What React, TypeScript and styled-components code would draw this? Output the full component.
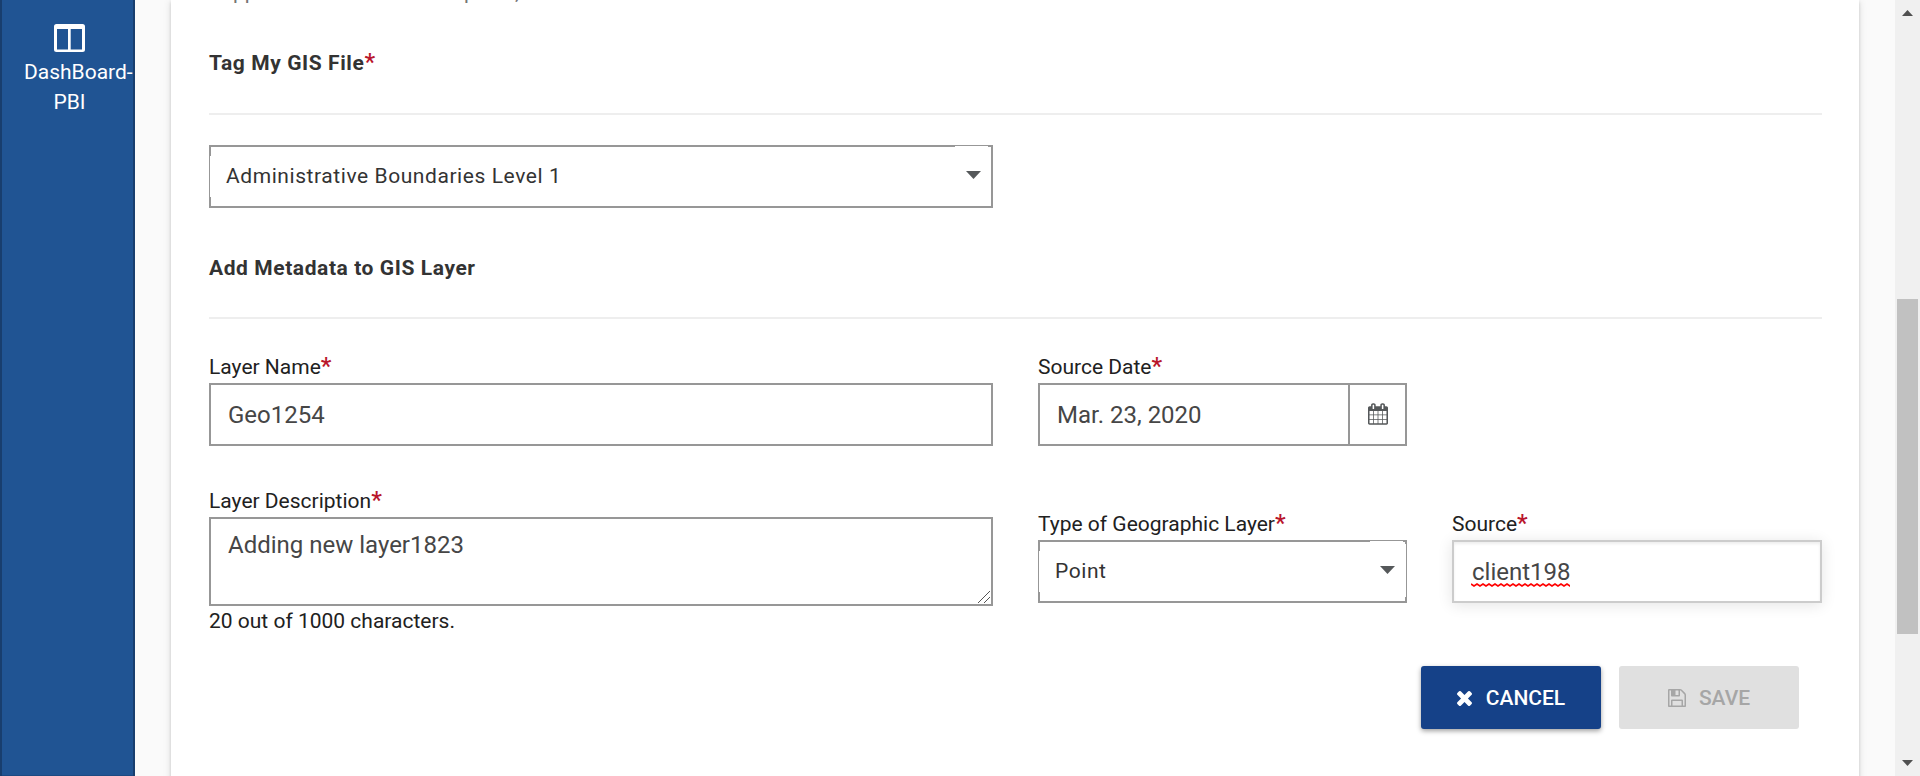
import React from 'react';
import styled, { createGlobalStyle, css } from 'styled-components';

const Global = createGlobalStyle`
  * { box-sizing: border-box; }
  html, body { margin: 0; height: 776px; overflow: hidden; background: #fafafa; }
  body { font-family: Roboto, "Liberation Sans", sans-serif; color: #212121; }
  input, textarea, button { font-family: inherit; outline: none; margin: 0; }
`;

const Page = styled.div`
  display: flex;
  width: 1920px;
  height: 776px;
  overflow: hidden;
`;

const Sidebar = styled.nav`
  width: 135px;
  flex: none;
  background: #205493;
  border: solid #183e6e;
  border-width: 0 2px;
  box-shadow: inset 0 -1px 0 #1c4a82;
  display: flex;
  flex-direction: column;
  align-items: center;
  padding: 24px 0 0 4px;
  color: #fff;
  svg { display: block; }
`;

const NavLabel = styled.div`
  display: flex;
  flex-direction: column;
  align-items: center;
  width: 91px;
  margin-top: 5px;
  font-size: 21px;
  line-height: 30px;
  span:first-child { align-self: flex-start; }
`;

const Content = styled.main`
  flex: 1;
  padding: 0 36px;
  min-width: 0;
`;

const Card = styled.section`
  height: 900px;
  background: #fff;
  padding: 0 37px 0 38px;
  box-shadow: 0 3px 2px -2px rgba(0, 0, 0, 0.2), 0 2px 3px rgba(0, 0, 0, 0.14), 0 1px 8px rgba(0, 0, 0, 0.12);
`;

const Hint = styled.div`
  display: flow-root;
  height: 48px;
  font-size: 21px;
  line-height: 30px;
  color: #757575;
`;

const HintText = styled.p`
  margin: -23px 0 0;
`;

const Heading = styled.h2<{ $height: number; $top?: number }>`
  margin: ${p => p.$top || 0}px 0 0;
  height: ${p => p.$height}px;
  font-size: 21px;
  line-height: 30px;
  font-weight: 700;
  letter-spacing: 0.58px;
  color: #333;
  border-bottom: 2px solid #eee;
`;

const Star = styled.span`
  color: #b9162c;
  font-size: 24px;
  line-height: 20px;
  font-weight: 500;
  letter-spacing: 0;
`;

const Row = styled.div<{ $top: number }>`
  display: grid;
  grid-template-columns: 784px 369px 370px;
  column-gap: 45px;
  align-items: start;
  margin-top: ${p => p.$top}px;
`;

const Field = styled.div<{ $top?: number }>`
  display: flex;
  flex-direction: column;
  padding-top: ${p => p.$top || 0}px;
`;

const Label = styled.label`
  height: 31px;
  font-size: 21px;
  line-height: 30px;
  color: #212121;
  white-space: nowrap;
`;

const box = css`
  border: 2px solid #979797;
  background: #fff;
  color: #464646;
  font-size: 24px;
  border-radius: 0;
`;

const Input = styled.input`
  ${box}
  width: 100%;
  height: 63px;
  padding: 0 17px;
`;

const FocusedInput = styled.div`
  ${box}
  height: 63px;
  padding: 0 18px;
  line-height: 60px;
  border-color: #ccc;
  box-shadow: 0 2px 14px rgba(0, 0, 0, 0.11), inset 0 2px 3px rgba(0, 0, 0, 0.07);
`;

const Misspelled = styled.span`
  position: relative;
  svg { position: absolute; left: -1px; bottom: -1px; }
`;

const TextArea = styled.textarea`
  ${box}
  display: block;
  height: 89px;
  padding: 11px 17px;
  line-height: 30px;
  resize: none;
`;

const AreaWrap = styled.div`
  position: relative;
  display: flex;
  flex-direction: column;
  svg { position: absolute; right: 3px; bottom: 3px; }
`;

const Counter = styled.div`
  font-size: 21px;
  line-height: 30px;
`;

const DateBox = styled.div`
  ${box}
  height: 63px;
  display: flex;
  align-items: stretch;
`;

const DateValue = styled.div`
  flex: 1;
  padding-left: 17px;
  line-height: 60px;
`;

const DateButton = styled.div`
  width: 57px;
  padding-bottom: 1px;
  border-left: 2px solid #979797;
  display: flex;
  align-items: center;
  justify-content: center;
`;

const SelectBox = styled.div<{ $thinRight?: boolean }>`
  ${box}
  position: relative;
  height: 63px;
  padding: 0 10px 2px 15px;
  display: flex;
  align-items: center;
  justify-content: space-between;
  font-size: 21px;
  letter-spacing: 0.57px;
  color: #333;
  svg { margin-bottom: 1px; }
  &::before {
    content: '';
    position: absolute;
    left: -1px;
    top: 9px;
    width: 1px;
    height: 41px;
    background: #fff;
  }
  &::after {
    content: '';
    position: absolute;
    top: -1px;
    right: ${p => (p.$thinRight ? 2 : 3)}px;
    width: 33px;
    height: 1px;
    background: #fff;
  }
`;

const ThinEdge = styled.i`
  position: absolute;
  right: -1px;
  top: 2px;
  width: 1px;
  height: 53px;
  background: #fff;
`;

const Actions = styled.div`
  display: flex;
  justify-content: flex-end;
  gap: 18px;
  padding-right: 23px;
  margin-top: 30px;
`;

const Button = styled.button<{ $primary?: boolean }>`
  width: 180px;
  height: 63px;
  padding: 1px 0 0;
  border: 0;
  border-radius: 3px;
  display: flex;
  align-items: center;
  justify-content: center;
  font-size: 21px;
  font-weight: 500;
  background: #e0e0e0;
  color: #a6a6a6;
  ${p => p.$primary && css`
    background: #154188;
    color: #fff;
    box-shadow: 0 2px 5px rgba(0, 0, 0, 0.38);
  `}
`;

const ButtonText = styled.span<{ $gap: number }>`
  margin-left: ${p => p.$gap}px;
`;

const Scrollbar = styled.div`
  width: 25px;
  flex: none;
  background: #f0f0f0;
  display: flex;
  flex-direction: column;
  align-items: center;
  justify-content: space-between;
  padding: 10px 0;
`;

const Thumb = styled.div`
  width: 21px;
  height: 335px;
  margin-top: 157px;
  background: #c1c1c1;
`;

const Triangle = ({ w, h, up, color }: { w: number; h: number; up?: boolean; color: string }) => (
  <svg width={w} height={h} viewBox="0 0 10 10" preserveAspectRatio="none">
    <path d={up ? 'M0 10L5 0L10 10Z' : 'M0 0H10L5 10Z'} fill={color} />
  </svg>
);

const PanelIcon = () => (
  <svg width="31" height="28" viewBox="0 0 31 28">
    <path
      fill="#fff"
      fillRule="evenodd"
      d="M2.500 0H28.500Q31 0 31 2.500V25.500Q31 28 28.500 28H2.500Q0 28 0 25.500V2.500Q0 0 2.500 0ZM3 5V25.500H14V5ZM16.700 5V25.500H28V5Z"
    />
  </svg>
);

const CalendarIcon = () => (
  <svg width="20" height="22" viewBox="0 0 1664 1792" fill="#55585a">
    <path d="M128 1664h288v-288h-288v288zM480 1664h320v-288h-320v288zM128 1312h288v-320h-288v320zM480 1312h320v-320h-320v320zM128 928h288v-288h-288v288zM864 1664h320v-288h-320v288zM480 928h320v-288h-320v288zM1248 1664h288v-288h-288v288zM864 1312h320v-320h-320v320zM512 448v-288q0-13-9.500-22.500t-22.500-9.500h-64q-13 0-22.500 9.500t-9.500 22.500v288q0 13 9.500 22.500t22.500 9.500h64q13 0 22.500-9.500t9.500-22.500zM1248 1312h288v-320h-288v320zM864 928h320v-288h-320v288zM1248 928h288v-288h-288v288zM1280 448v-288q0-13-9.500-22.500t-22.500-9.500h-64q-13 0-22.500 9.500t-9.500 22.500v288q0 13 9.500 22.500t22.500 9.500h64q13 0 22.500-9.500t9.500-22.500zM1664 384v1280q0 52-38 90t-90 38h-1408q-52 0-90-38t-38-90v-1280q0-52 38-90t90-38h128v-96q0-66 47-113t113-47h64q66 0 113 47t47 113v96h384v-96q0-66 47-113t113-47h64q66 0 113 47t47 113v96h128q52 0 90 38t38 90z" />
  </svg>
);

const SaveIcon = () => (
  <svg width="18" height="18" viewBox="0 0 1536 1536" fill="currentColor">
    <path d="M384 1408h768v-384h-768v384zM1280 1408h128v-896q0-14-10-38.500t-20-34.500l-281-281q-10-10-34-20t-39-10v416q0 40-28 68t-68 28h-576q-40 0-68-28t-28-68v-416h-128v1280h128v-416q0-40 28-68t68-28h832q40 0 68 28t28 68v416zM896 480v-320q0-13-9.500-22.500t-22.500-9.500h-192q-13 0-22.500 9.500t-9.500 22.500v320q0 13 9.500 22.500t22.500 9.500h192q13 0 22.500-9.500t9.500-22.500zM1536 512v928q0 40-28 68t-68 28h-1344q-40 0-68-28t-28-68v-1344q0-40 28-68t68-28h928q40 0 88 20t76 48l280 280q28 28 48 76t20 88z" />
  </svg>
);

const CloseIcon = () => (
  <svg width="15" height="15" viewBox="110 366 1188 1188" fill="currentColor">
    <path d="M1298 1322q0 40-28 68l-136 136q-28 28-68 28t-68-28l-294-294-294 294q-28 28-68 28t-68-28l-136-136q-28-28-28-68t28-68l294-294-294-294q-28-28-28-68t28-68l136-136q28-28 68-28t68 28l294 294 294-294q28-28 68-28t68 28l136 136q28 28 28 68t-28 68l-294 294 294 294q28 28 28 68z" />
  </svg>
);

const Squiggle = () => (
  <svg width="99" height="4" viewBox="0 0 99 4">
    <path
      d={'M0 1' + Array.from({ length: 17 }, (_, i) => `L${i * 6 + 3} 3L${i * 6 + 6} 1`).join('')}
      fill="none"
      stroke="#f00"
      strokeWidth="1.6"
    />
  </svg>
);

const Grip = () => (
  <svg width="12" height="12" viewBox="0 0 12 12">
    <path d="M0 12L12 0M6 12L12 6" stroke="#555" strokeWidth="1" />
  </svg>
);

export default function App() {
  return (
    <Page>
      <Global />
      <Sidebar>
        <PanelIcon />
        <NavLabel>
          <span>DashBoard-</span>
          <span>PBI</span>
        </NavLabel>
      </Sidebar>
      <Content>
        <Card>
          <Hint>
            <HintText>Supported file formats: Shapefile,</HintText>
          </Hint>
          <Heading $height={67}>Tag My GIS File<Star>*</Star></Heading>
          <Row $top={30}>
            <SelectBox>
              Administrative Boundaries Level 1
              <Triangle w={15} h={8} color="#55585a" />
            </SelectBox>
          </Row>
          <Heading $height={66} $top={45}>Add Metadata to GIS Layer</Heading>
          <Row $top={33}>
            <Field>
              <Label>Layer Name<Star>*</Star></Label>
              <Input defaultValue="Geo1254" />
            </Field>
            <Field>
              <Label>Source Date<Star>*</Star></Label>
              <DateBox>
                <DateValue>Mar. 23, 2020</DateValue>
                <DateButton><CalendarIcon /></DateButton>
              </DateBox>
            </Field>
          </Row>
          <Row $top={40}>
            <Field>
              <Label>Layer Description<Star>*</Star></Label>
              <AreaWrap>
                <TextArea defaultValue="Adding new layer1823" />
                <Grip />
              </AreaWrap>
              <Counter>20 out of 1000 characters.</Counter>
            </Field>
            <Field $top={23}>
              <Label>Type of Geographic Layer<Star>*</Star></Label>
              <SelectBox $thinRight>
                Point
                <Triangle w={15} h={8} color="#55585a" />
                <ThinEdge />
              </SelectBox>
            </Field>
            <Field $top={23}>
              <Label>Source<Star>*</Star></Label>
              <FocusedInput><Misspelled>client198<Squiggle /></Misspelled></FocusedInput>
            </Field>
          </Row>
          <Actions>
            <Button $primary><CloseIcon /><ButtonText $gap={14}>CANCEL</ButtonText></Button>
            <Button><SaveIcon /><ButtonText $gap={13}>SAVE</ButtonText></Button>
          </Actions>
        </Card>
      </Content>
      <Scrollbar>
        <Triangle w={11} h={6} up color="#505050" />
        <Thumb />
        <Triangle w={11} h={6} color="#505050" />
      </Scrollbar>
    </Page>
  );
}
